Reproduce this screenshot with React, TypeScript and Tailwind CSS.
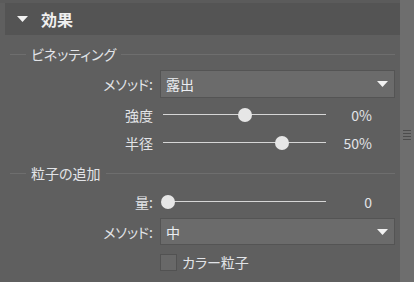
import React from 'react'

const font = "font-['Noto_Sans_CJK_JP','Noto_Sans',sans-serif] [font-feature-settings:'palt']"

function SectionTitle({ title }: { title: string }) {
  return (
    <div className="flex items-center h-[18px] pl-[10px] pr-[5px]">
      <div className="w-[16px] h-px bg-[#6e6e6e]" />
      <span className="px-[5px] text-[14px] leading-none text-[#e2e4e8]">{title}</span>
      <div className="flex-1 h-px bg-[#6e6e6e]" />
    </div>
  )
}

function Label({ text }: { text: string }) {
  return (
    <div className="w-[153px] shrink-0 text-right text-[14px] leading-none text-[#e2e4e8]">
      {text}
    </div>
  )
}

function Caret() {
  return (
    <svg width="11" height="6" viewBox="0 0 11 6" className="shrink-0">
      <path d="M0 0 H11 L5.5 6 Z" fill="#f2f2f2" />
    </svg>
  )
}

function Select({ label, value, h }: { label: string; value: string; h: string }) {
  return (
    <div className={`flex items-center ${h}`}>
      <Label text={label} />
      <div className="ml-[7px] w-[235px] h-full flex items-center justify-between pl-[5px] pr-[6px] bg-[#6b6b6b] border border-[#545454]">
        <span className="text-[14px] leading-none text-[#eceef2]">{value}</span>
        <Caret />
      </div>
    </div>
  )
}

function Slider({ label, value, pos }: { label: string; value: string; pos: number }) {
  // track runs 163px wide starting 3px into the control
  const center = 3 + pos * 163
  return (
    <div className="flex items-center h-[28px]">
      <Label text={label} />
      <div className="ml-[7px] relative w-[166px] h-[16px]">
        <div className="absolute left-[3px] right-0 top-[7px] h-px bg-[#d6d6d6]" />
        <div
          className="absolute top-[1px] w-[14px] h-[14px] rounded-full bg-[#e6e6e6]"
          style={{ left: center - 7 }}
        />
      </div>
      <div className="w-[46px] text-right text-[14px] leading-none text-[#e2e4e8]">{value}</div>
    </div>
  )
}

export default function App() {
  return (
    <div className={`w-[414px] h-[282px] flex bg-[#5f5f5f] overflow-hidden ${font}`}>
      <div className="w-[400px] flex flex-col">
        <div className="h-[3px] bg-[#5b5b5b]" />
        <div className="ml-[5px] h-[32px] bg-[#545454] flex items-center pl-[12px]">
          <Caret />
          <span className="ml-[13px] text-[16px] font-bold leading-none text-[#f0f0f0]">効果</span>
        </div>

        <div className="mt-[10px]">
          <SectionTitle title="ビネッティング" />
        </div>
        <div className="mt-[7px]">
          <Select label="メソッド:" value="露出" h="h-[28px]" />
        </div>
        <div className="mt-[3px]">
          <Slider label="強度" value="0%" pos={0.5} />
          <Slider label="半径" value="50%" pos={0.73} />
        </div>

        <div className="mt-[7px]">
          <SectionTitle title="粒子の追加" />
        </div>
        <div className="mt-[6px]">
          <Slider label="量:" value="0" pos={0.03} />
        </div>
        <div className="mt-[2px]">
          <Select label="メソッド:" value="中" h="h-[27px]" />
        </div>
        <div className="mt-[8px] flex items-center h-[18px]">
          <div className="w-[160px] shrink-0" />
          <div className="w-[17px] h-[17px] bg-[#686868] border border-[#525252]" />
          <span className="ml-[5px] text-[14px] leading-none text-[#e2e4e8]">カラー粒子</span>
        </div>
      </div>

      <div className="w-[14px] bg-[#6e6e6e] flex flex-col items-center pt-[130px] gap-[2px]">
        <div className="w-[8px] h-px bg-[#4c4c4c]" />
        <div className="w-[8px] h-px bg-[#4c4c4c]" />
        <div className="w-[8px] h-px bg-[#4c4c4c]" />
        <div className="w-[8px] h-px bg-[#4c4c4c]" />
      </div>
    </div>
  )
}
